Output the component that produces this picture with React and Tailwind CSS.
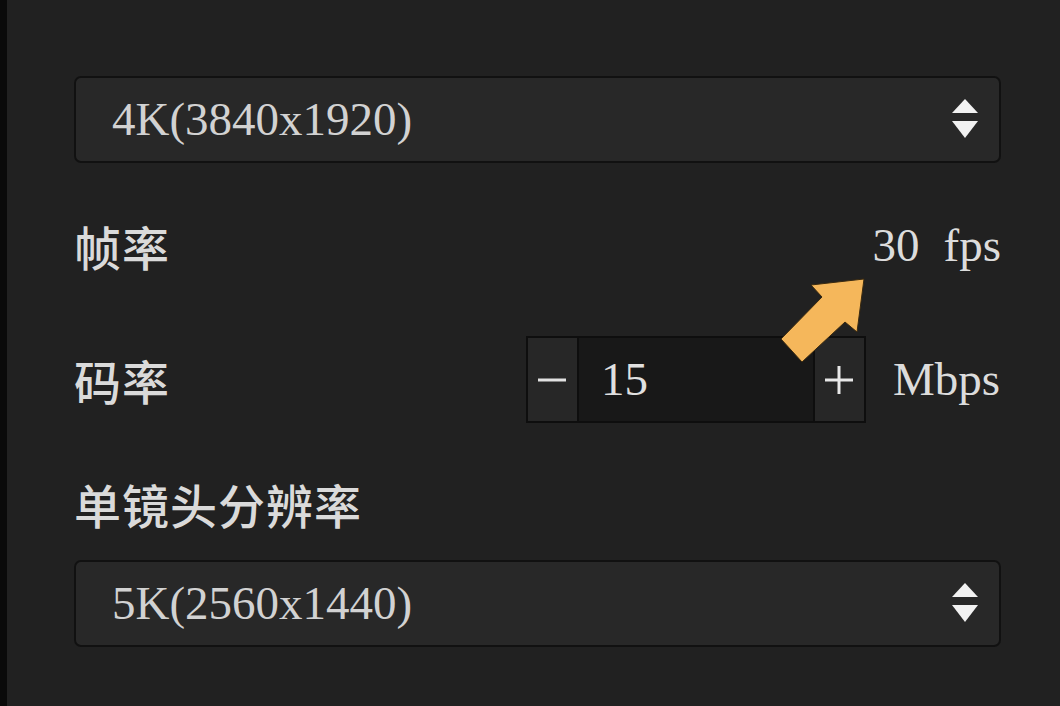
import React from 'react'

const serif = { fontFamily: '"Liberation Serif", "Times New Roman", serif' }

function UpDown() {
  return (
    <svg width="28" height="42" viewBox="0 0 28 42" className="shrink-0">
      <polygon points="14,0 27,14 1,14" fill="#f2f2f2" />
      <polygon points="1,22 27,22 14,39" fill="#f2f2f2" />
    </svg>
  )
}

function Select({ value }) {
  return (
    <div className="flex h-[87px] items-center justify-between rounded-[7px] border-2 border-[#111111] bg-[#282828] pl-[36px] pr-[20px]">
      <span className="text-[47px] leading-none text-[#d2d2d2]" style={serif}>
        {value}
      </span>
      <UpDown />
    </div>
  )
}

function Label({ children }) {
  return (
    <span className="font-['Noto_Sans_CJK_SC',sans-serif] text-[47px] font-medium leading-none tracking-[1px] text-[#dadada]">
      {children}
    </span>
  )
}

function Stepper({ value }) {
  return (
    <div className="flex h-[87px] w-[340px] border-2 border-[#0e0e0e] bg-[#0e0e0e]">
      <button className="flex w-[49px] items-center justify-center bg-[#272727]">
        <svg width="28" height="4" viewBox="0 0 28 4">
          <rect width="28" height="3" y="0.5" fill="#e2e2e2" />
        </svg>
      </button>
      <div className="flex flex-1 items-center border-x-2 border-[#0e0e0e] bg-[#181818] pl-[22px]">
        <span className="text-[47px] leading-none text-[#e0e0e0]" style={serif}>
          {value}
        </span>
      </div>
      <button className="flex w-[49px] items-center justify-center bg-[#272727]">
        <svg width="28" height="28" viewBox="0 0 28 28">
          <rect x="0" y="12.5" width="28" height="3" fill="#e8e8e8" />
          <rect x="12.5" y="0" width="3" height="28" fill="#e8e8e8" />
        </svg>
      </button>
    </div>
  )
}

export default function App() {
  return (
    <div className="relative flex h-[706px] w-[1060px] overflow-hidden bg-[#212121]">
      <div className="w-[7px] shrink-0 bg-[#0a0a0a]" />
      <div className="flex flex-1 flex-col pl-[67px] pr-[59px] pt-[76px]">
        <Select value="4K(3840x1920)" />

        <div className="mt-[38px] flex h-[88px] items-center justify-between">
          <Label>帧率</Label>
          <div className="flex items-baseline gap-[24px] text-[47px] leading-none text-[#dcdcdc]" style={serif}>
            <span>30</span>
            <span>fps</span>
          </div>
        </div>

        <div className="mt-[47px] flex h-[87px] items-center justify-between">
          <Label>码率</Label>
          <div className="flex items-center gap-[27px]">
            <Stepper value="15" />
            <span className="mr-[1px] text-[47px] leading-none text-[#dcdcdc]" style={serif}>
              Mbps
            </span>
          </div>
        </div>

        <div className="mt-[50px] flex h-[60px] items-center">
          <Label>单镜头分辨率</Label>
        </div>

        <div className="mt-[27px]">
          <Select value="5K(2560x1440)" />
        </div>
      </div>

      {/* callout arrow pointing at the fps value */}
      <svg
        className="absolute left-[778px] top-[276px]"
        width="90"
        height="90"
        viewBox="0 0 90 90"
      >
        <polygon
          points="86,3 33,9 44,21 3,63 24,86 67,46 79,56"
          fill="#f5b75b"
          stroke="#3a2a10"
          strokeWidth="1"
          strokeLinejoin="round"
        />
      </svg>
    </div>
  )
}
